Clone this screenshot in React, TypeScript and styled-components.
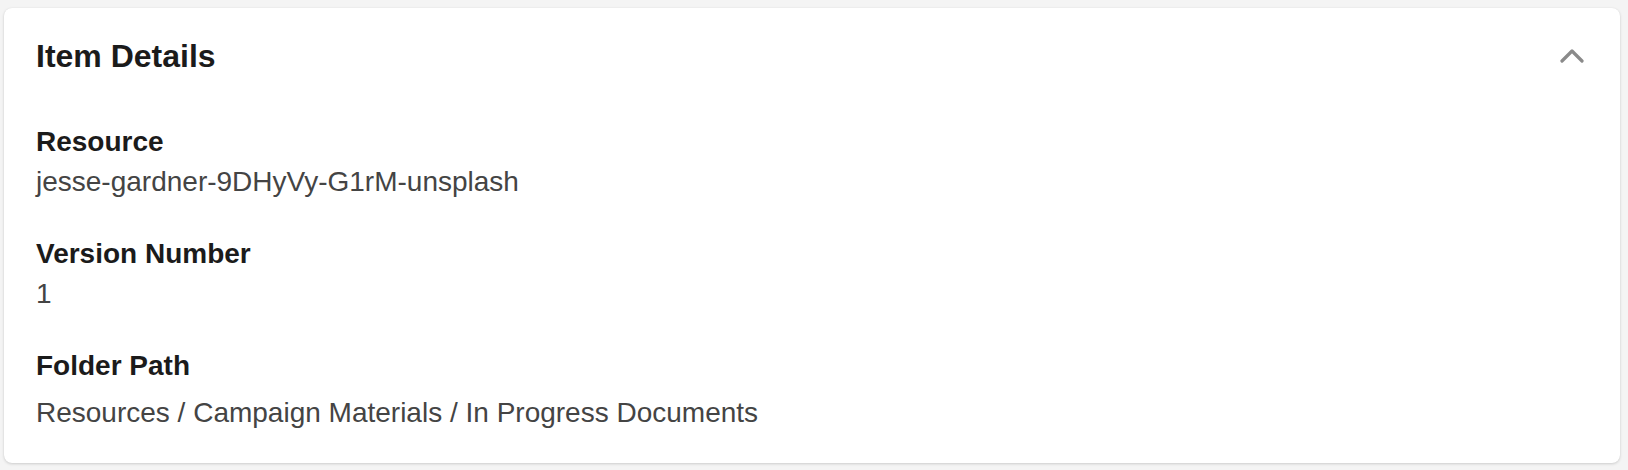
import React from 'react';
import styled, { createGlobalStyle } from 'styled-components';

const GlobalStyle = createGlobalStyle`
    html, body {
        margin: 0;
        padding: 0;
        background: #f4f4f4;
    }
    body {
        font-family: 'Liberation Sans', Arial, Helvetica, sans-serif;
        -webkit-font-smoothing: antialiased;
    }
`;

type Detail = {
    label: string;
    value: string;
    path?: boolean;
};

const DETAILS: Detail[] = [
    { label: 'Resource', value: 'jesse-gardner-9DHyVy-G1rM-unsplash' },
    { label: 'Version Number', value: '1' },
    { label: 'Folder Path', value: 'Resources / Campaign Materials / In Progress Documents', path: true },
];

const App: React.FC = () => {
    return (
        <>
            <GlobalStyle />
            <Page>
                <Card>
                    <Header>
                        <Title>Item Details</Title>
                        <CollapseButton aria-label="Collapse">
                            <svg width="24" height="16" viewBox="0 0 24 16" fill="none">
                                <path
                                    d="M2 13L12 3L22 13"
                                    stroke="#8a8a8a"
                                    strokeWidth="3.2"
                                    strokeLinecap="round"
                                    strokeLinejoin="round"
                                />
                            </svg>
                        </CollapseButton>
                    </Header>
                    <Body>
                        {DETAILS.map((d) => (
                            <Field key={d.label}>
                                <Label>{d.label}</Label>
                                <Value path={d.path}>{d.value}</Value>
                            </Field>
                        ))}
                    </Body>
                </Card>
            </Page>
        </>
    );
};

const Page = styled.div`
    padding: 8px 8px 7px 4px;
`;

const Card = styled.div`
    background: #ffffff;
    border-radius: 8px;
    box-shadow: 0 1px 3px rgba(0, 0, 0, 0.16), 0 0 1px rgba(0, 0, 0, 0.08);
    padding: 24px 32px 30px 32px;
    height: 455px;
    box-sizing: border-box;
`;

const Header = styled.div`
    display: flex;
    align-items: center;
    justify-content: space-between;
    height: 48px;
`;

const Title = styled.h2`
    margin: 0;
    font-size: 32px;
    line-height: 48px;
    font-weight: 700;
    color: #1b1b1b;
`;

const CollapseButton = styled.button`
    display: flex;
    align-items: center;
    justify-content: center;
    border: none;
    background: none;
    padding: 0;
    margin-right: 4px;
    cursor: pointer;
`;

const Body = styled.div`
    display: flex;
    flex-direction: column;
    gap: 32px;
    margin-top: 42px;
`;

const Field = styled.div`
    display: flex;
    flex-direction: column;
`;

const Label = styled.div`
    font-size: 28px;
    line-height: 40px;
    font-weight: 700;
    color: #1b1b1b;
`;

const Value = styled.div<{ path?: boolean }>`
    font-size: 28px;
    line-height: 40px;
    font-weight: 400;
    color: #444444;
    margin-top: ${(props) => (props.path ? '7px' : '0')};
`;

export default App;
